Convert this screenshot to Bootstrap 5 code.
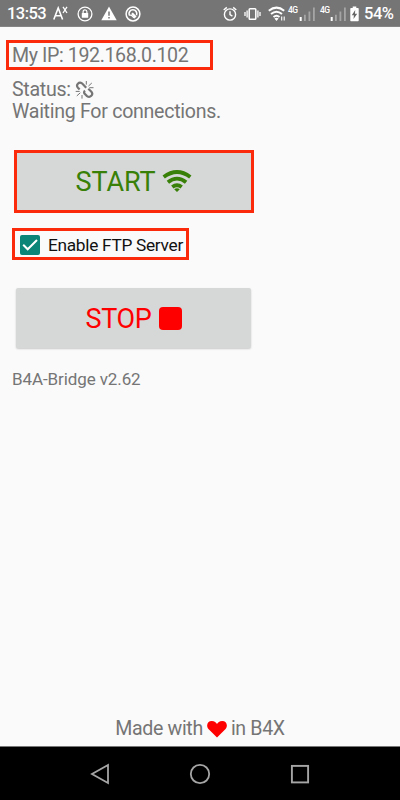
<!DOCTYPE html>
<html lang="en">
<head>
<meta charset="utf-8">
<meta name="viewport" content="width=device-width, initial-scale=1">
<title>B4A-Bridge</title>
<link href="https://cdn.jsdelivr.net/npm/bootstrap@5.3.0/dist/css/bootstrap.min.css" rel="stylesheet">
<style>
body{font-family:Roboto,"Liberation Sans",sans-serif;background:#fafafa;color:#757575;height:800px;font-size:19.6px;line-height:22px}
svg{display:block;flex:none}
.statusbar{height:27px;background:#757575;color:#fff;padding:1px 7px 0;border-bottom:1px solid #858585}
.clock{font-size:16.5px;width:46px;letter-spacing:-.55px;font-weight:500;padding-top:1px}
.level{font-size:16.5px;width:29px;margin-left:5px;font-weight:500;letter-spacing:-.5px;padding-top:1px}
.net{font-size:8.5px;line-height:8px;width:10px;font-weight:500;align-self:flex-start;margin-top:5px;letter-spacing:-.6px}
.marked{border:3px solid #fb2a0a}
.ip-box{width:207px;height:30px;margin:13px 0 0 6px;padding:2px 0 0 3px;letter-spacing:-.39px}
.status-text{margin:9px 0 0 12px;letter-spacing:-.29px}
.action{border-radius:2px;background:#d6d7d7;font-size:27px;line-height:30px;width:235px;height:60px}
.start{width:240px;height:63px;margin:27px 0 0 14px;border-radius:0;color:#388007}
.start-text{letter-spacing:-.1px}
.stop{margin:28px 0 0 16px;color:#f00;box-shadow:0 1px 2px #0003}
.ftp{width:177px;height:32px;margin:15px 0 0 12px;padding:1px 0 0 5px;color:#111;font-size:17.3px;letter-spacing:-.3px}
.tick{width:20px;height:20px;background:#0b8577;border-radius:2px;margin-right:8px}
.stop-icon{width:23px;height:23px;border-radius:4px;background:#f00;margin-left:7px}
.stop-text{letter-spacing:-.3px;padding-top:2px}
.version{font-size:17px;letter-spacing:-.1px;margin:20px 0 0 12px}
.credit{margin-bottom:6px;letter-spacing:-.35px;padding-top:1px}
.navkeys{height:54px;background:#000;border-top:1px solid #777}
</style>
</head>
<body class="d-flex flex-column m-0 overflow-hidden">
<header class="statusbar d-flex align-items-center flex-shrink-0 text-nowrap">
  <span class="clock">13:53</span>
  <svg width="16" height="16" viewBox="0 0 16 16" fill="none" stroke="#fff" stroke-width="1.6"><path d="M.8 13.500 5.200 2l4.400 11.500M2.400 9.800h5.600"/><path d="m10 .8 4 6.200M14 .8 10 7" stroke-width="1.300"/></svg>
  <svg class="ms-2" width="16" height="16" viewBox="0 0 16 16"><circle cx="8" cy="8" r="6.900" fill="none" stroke="#fff" stroke-width="1.300"/><rect x="4.800" y="7" width="6.400" height="4.800" rx=".5" fill="#fff"/><path d="M6.100 7V5.700a1.900 1.900 0 0 1 3.800 0V7" fill="none" stroke="#fff" stroke-width="1.200"/></svg>
  <svg class="ms-2" width="16" height="16" viewBox="0 0 16 16"><path d="M8 .6 15.700 14.300H.3Z" fill="#fff"/><path d="M8 5.500v4.300M8 11v1.600" stroke="#757575" stroke-width="1.500"/></svg>
  <svg class="ms-2" width="16" height="16" viewBox="0 0 16 16" fill="none" stroke="#fff"><circle cx="8" cy="8" r="6.900" stroke-width="1.500"/><path d="M4.300 9.200a3.900 3.900 0 1 1 7.200 0" stroke-width="1.600"/><path d="m7 7.200 3.800 4" stroke-width="2.200"/><path d="M4.300 9.400q1.700-1 3 .6t2.700 1.800" stroke-width="1.200"/></svg>
  <svg class="ms-auto" width="14" height="16" viewBox="0 0 14 16" fill="none" stroke="#fff" stroke-width="1.400"><circle cx="7" cy="8.500" r="5.600"/><path d="M7 5.300v3.400l2.400 1.500M.7 4 3.800 1.400M13.300 4l-3.100-2.600"/></svg>
  <svg width="17" height="16" viewBox="0 0 17 16" fill="none" stroke="#fff" style="margin-left:7px"><rect x="5.200" y="2.700" width="6.600" height="10.600" rx=".8" stroke-width="1.500"/><path d="M3.100 4.500v7M13.900 4.500v7M1 6v4M16 6v4" stroke-width="1.300"/></svg>
  <svg width="20" height="16" viewBox="0 0 20 16" fill="none" stroke="#fff" stroke-width="2" style="margin-left:7px"><path d="M.8 4.700q7.700-6.200 15.400 0M3 8q5.500-4.600 11 0M5.500 11q3-2.500 6 0"/><path d="m6.400 12.500 2.100 2.400 2.100-2.400q-2.100-1.300-4.200 0" fill="#fff" stroke="none"/><path d="M13.700 10.500v4M16.200 10.500v4" stroke-width="1.100"/></svg>
  <span class="net">4G</span>
  <svg width="17" height="16" viewBox="0 0 17 16" style="margin-left:1px"><path d="M.7 11h2v4h-2z" fill="#fff"/><path d="M5 8.700h1.800V15H5zm4.500-3.200h1.800V15H9.500zm4.500-4h1.800V15H14z" fill="#a5a5a5"/></svg>
  <span class="net ms-1">4G</span>
  <svg width="17" height="16" viewBox="0 0 17 16"><path d="M.7 11h2v4h-2z" fill="#fff"/><path d="M5 8.700h1.800V15H5zm4.500-3.200h1.800V15H9.500zm4.500-4h1.800V15H14z" fill="#a5a5a5"/></svg>
  <svg width="9" height="16" viewBox="0 0 9 16" style="margin-left:3px"><path d="M2.700.5h3.600v1.500H8q.7 0 .7.700v11.800q0 .7-.7.700H1q-.7 0-.7-.7V2.700q0-.7.700-.7h1.700z" fill="#fff"/><path d="M5.200 4 1.800 9.200h2.100l-.4 3.900 3.700-5.300H5z" fill="#666"/></svg>
  <span class="level">54%</span>
</header>

<main class="d-flex flex-column flex-grow-1">
  <div class="ip-box marked d-flex align-items-center text-nowrap">My IP: 192.168.0.102</div>
  <div class="status-text">
    <div class="d-flex align-items-center">Status:
      <svg width="20" height="20" viewBox="0 0 20 20" fill="none" stroke="#757575" style="margin-left:4px"><path d="M4.600 9.500 3 7.800Q1.100 5.600 2.900 3.700T7 3.300l4.200 4.400M13.300 8.700l3.100 3q1.800 2.200-.1 4.100t-4.300.3l-2.500-2.500q-1-1.700.5-2.900" stroke-width="2.200"/><path d="M11.300 1v3.600M16.800 3l-3.300 3M14.300 7.700h4.200M7 15v3.600M5.300 12.800l-3.500 3.100M4.700 11.400H.7" stroke-width="1"/></svg>
    </div>
    <div>Waiting For connections.</div>
  </div>
  <button type="button" class="btn action start marked p-0 d-flex align-items-center justify-content-center"><span class="start-text">START</span>
    <svg width="30" height="23" viewBox="0 0 30 23" fill="none" stroke="#388007" stroke-width="3.800" style="margin-left:7px"><path d="M1.700 7q13.300-10 26.600 0M5.900 12.200q9.100-7.200 18.200 0M10.300 17q4.700-3.600 9.400 0"/><path d="m12.200 19.300 2.800 2.700 2.800-2.700q-2.800-1.900-5.600 0" fill="#388007" stroke="none"/></svg>
  </button>
  <label class="ftp marked d-flex align-items-center text-nowrap">
    <span class="tick"><svg width="20" height="20" viewBox="0 0 20 20" fill="none" stroke="#fff" stroke-width="2"><path d="m3.200 9.800 4.500 4.500L17 5"/></svg></span><span>Enable FTP Server</span>
  </label>
  <button type="button" class="btn action stop border-0 p-0 d-flex align-items-center justify-content-center"><span class="stop-text">STOP</span><span class="stop-icon"></span></button>
  <div class="version">B4A-Bridge v2.62</div>
  <footer class="credit mt-auto d-flex align-items-center justify-content-center text-nowrap">Made with
    <svg width="20" height="18" viewBox="0 0 20 18" style="margin:0 4px"><path d="M10 17.500 1.700 9.200C-1.300 6 .2 1 4.800 1 7.500 1 9.200 2.500 10 4c.8-1.500 2.500-3 5.200-3 4.600 0 6.100 5 3.100 8.200Z" fill="red"/></svg>in B4X
  </footer>
</main>

<nav class="navkeys d-flex align-items-center justify-content-center flex-shrink-0">
  <svg width="20" height="22" viewBox="0 0 20 22" fill="none" stroke="#a5a5a5" stroke-width="1.800"><path d="M18 2v18L2 11Z"/></svg>
  <svg width="22" height="22" viewBox="0 0 22 22" fill="none" stroke="#a5a5a5" stroke-width="1.800" style="margin:0 79px"><circle cx="11" cy="11" r="9.200"/></svg>
  <svg width="20" height="20" viewBox="0 0 20 20" fill="none" stroke="#a5a5a5" stroke-width="1.900"><rect x="1.900" y="1.900" width="16.200" height="16.500"/></svg>
</nav>
<script src="https://cdn.jsdelivr.net/npm/bootstrap@5.3.0/dist/js/bootstrap.bundle.min.js"></script>
</body>
</html>
